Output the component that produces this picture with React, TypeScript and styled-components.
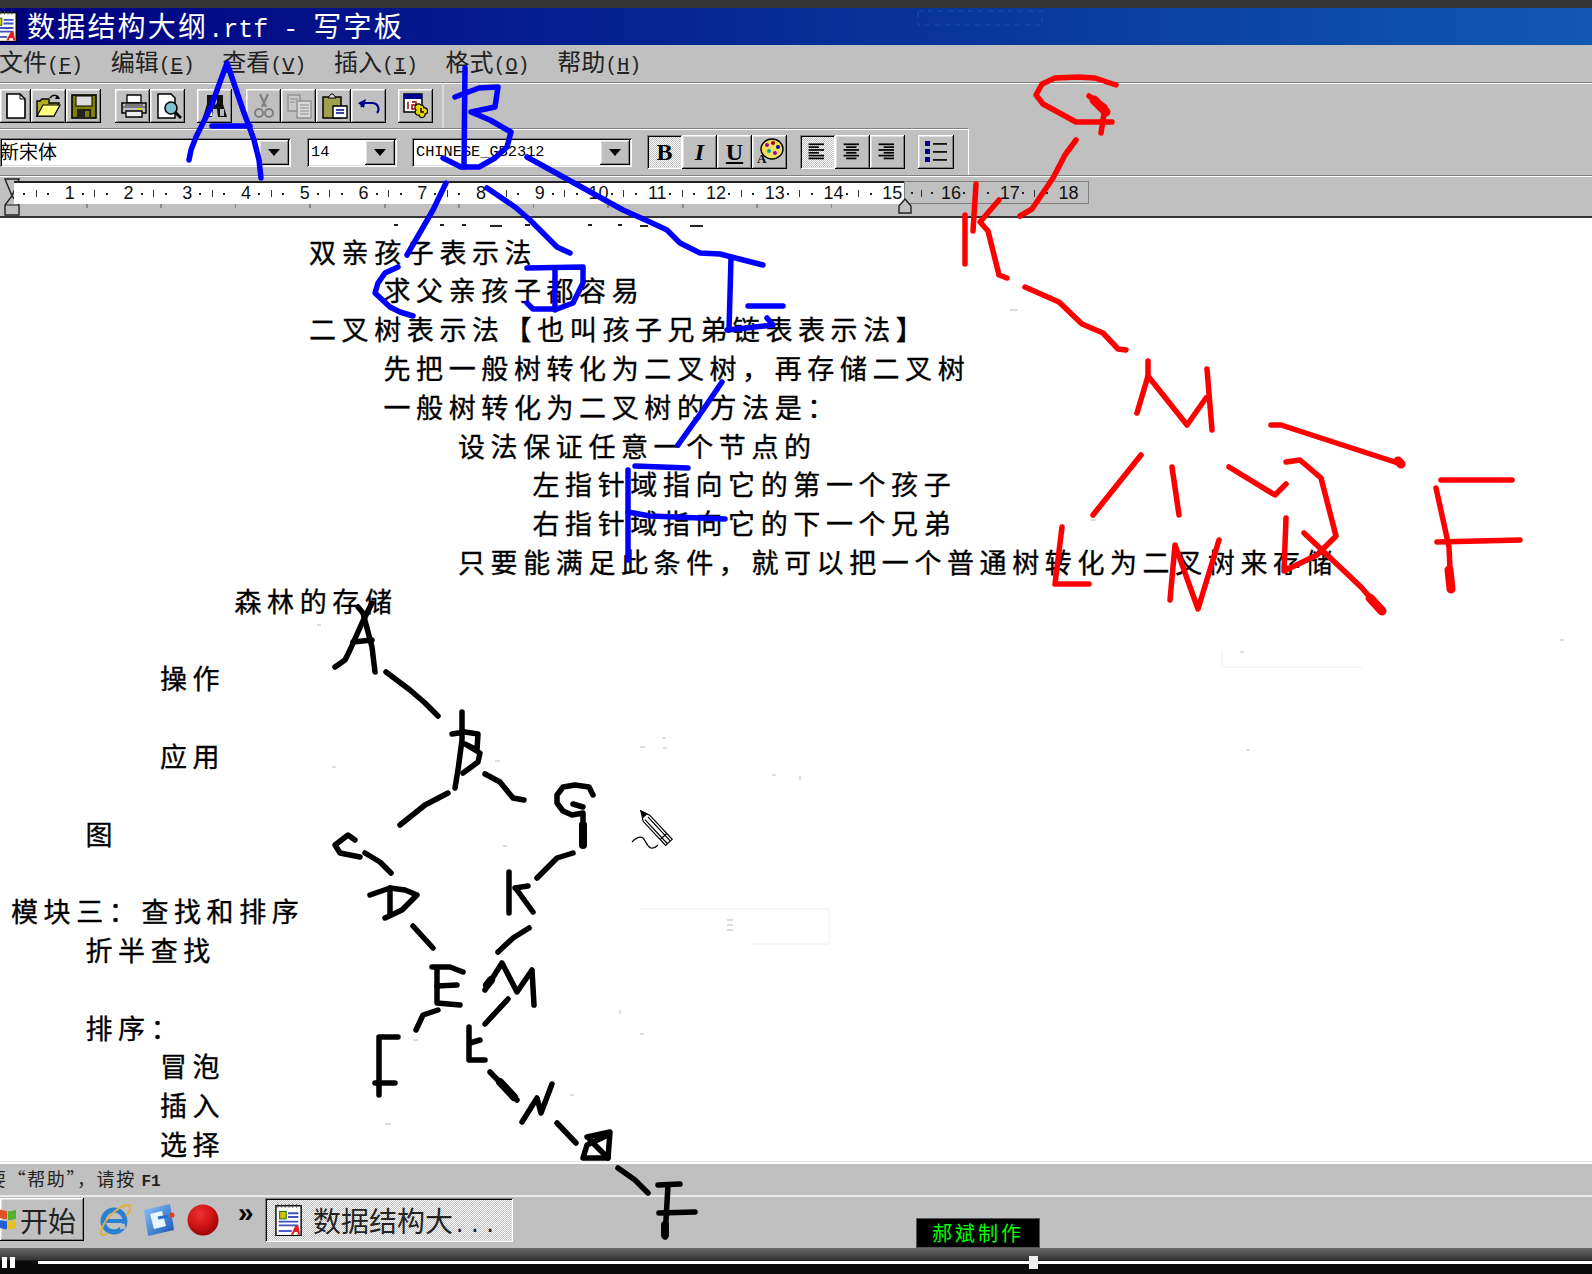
import React from "react";
import styled, { createGlobalStyle, css } from "styled-components";

const Global = createGlobalStyle`
  html, body { margin: 0; padding: 0; background: #c0c0c0; }
  * { box-sizing: border-box; }
`;

const CJK = `"Noto Sans CJK SC", "Liberation Sans", sans-serif`;
const MONO = `"Liberation Mono", "Noto Sans CJK SC", monospace`;

const raised = css`
  background: #c0c0c0;
  box-shadow: inset -1px -1px #000, inset 1px 1px #fff, inset -2px -2px #808080, inset 2px 2px #dfdfdf;
`;
const sunken = css`
  box-shadow: inset 1px 1px #808080, inset -1px -1px #fff, inset 2px 2px #000, inset -2px -2px #dfdfdf;
`;
const dither = css`
  background: repeating-conic-gradient(#fff 0 25%, #c0c0c0 0 50%) 0 0 / 2px 2px;
`;

const Page = styled.div`
  position: relative;
  width: 1592px;
  height: 1274px;
  overflow: hidden;
  display: flex;
  flex-direction: column;
  background: #c0c0c0;
  font-family: ${CJK};
  color: #000;
`;
const TopStrip = styled.div`
  flex: 0 0 8px;
  background: #333;
`;
const TitleBar = styled.div`
  flex: 0 0 37px;
  min-height: 0;
  display: flex;
  align-items: center;
  gap: 9px;
  background: linear-gradient(90deg, #000080 0%, #0a3ea0 70%, #1058b4 100%);
  color: #fff;
  font-size: 28px;
  line-height: 30px;
  white-space: nowrap;
  svg { margin-left: -9px; flex: none; }
`;
const TitleLatin = styled.span`
  font-family: ${MONO};
  font-size: 25px;
  line-height: 1;
  white-space: pre;
`;
const TitleCjk = styled.span`
  letter-spacing: 2.2px;
`;
const MenuBar = styled.div`
  flex: 0 0 37px;
  min-height: 0;
  display: flex;
  gap: 27.6px;
  align-items: center;
  margin-left: -1px;
  padding-bottom: 5px;
  font-size: 24px;
  line-height: 30px;
  color: #222;
`;
const MenuItem = styled.span`
  white-space: nowrap;
`;
const MenuKey = styled.span`
  font-family: ${MONO};
  font-size: 20px;
  line-height: 1;
`;
const MenuLetter = styled.span`
  text-decoration: underline;
`;
const ToolBar = styled.div`
  flex: 0 0 46px;
  min-height: 0;
  display: flex;
  align-items: center;
  border-top: 1px solid #808080;
  box-shadow: inset 0 1px #fff;
`;
const FormatBar = styled.div`
  flex: 0 0 47px;
  min-height: 0;
  display: flex;
  align-items: center;
  width: 969px;
  border-top: 1px solid #808080;
  box-shadow: inset 0 1px #fff;
  border-right: 1px solid #fff;
`;
const Group = styled.div<{ $gap?: number; $ml?: number }>`
  display: flex;
  margin-right: ${(p) => p.$gap ?? 0}px;
  margin-left: ${(p) => p.$ml ?? 0}px;
`;
const ToolBtn = styled.button<{ $on?: boolean; $w?: number }>`
  width: ${(p) => p.$w ?? 35}px;
  height: 34px;
  padding: 0;
  border: 0;
  display: flex;
  align-items: center;
  justify-content: center;
  ${raised}
  ${(p) => p.$on && css`${dither}${sunken}`}
  svg { display: block; }
`;
const Sep = styled.div`
  align-self: stretch;
  width: 2px;
  margin-left: 9px;
  background: #d8d8d8;
`;
const Combo = styled.div<{ $w: number; $ml?: number }>`
  width: ${(p) => p.$w}px;
  margin-left: ${(p) => p.$ml ?? 0}px;
  height: 29px;
  display: flex;
  background: #fff;
  ${sunken}
  padding: 2px;
`;
const ComboText = styled.span<{ $mono?: boolean }>`
  flex: 1;
  min-width: 0;
  white-space: nowrap;
  font-size: ${(p) => (p.$mono ? 15.3 : 19)}px;
  font-family: ${(p) => (p.$mono ? MONO : CJK)};
  line-height: ${(p) => (p.$mono ? 24 : 22)}px;
  padding-left: ${(p) => (p.$mono ? 2 : 0)}px;
  margin-left: ${(p) => (p.$mono ? 0 : -2)}px;
`;
const ComboArrow = styled.div`
  flex: 0 0 30px;
  display: flex;
  align-items: center;
  justify-content: center;
  ${raised}
  &::after {
    content: "";
    border-left: 6px solid transparent;
    border-right: 6px solid transparent;
    border-top: 7px solid #000;
  }
`;
const FmtLetter = styled.span<{ $italic?: boolean; $under?: boolean }>`
  font-family: "Liberation Serif", serif;
  font-weight: 700;
  font-size: 24px;
  line-height: 1;
  font-style: ${(p) => (p.$italic ? "italic" : "normal")};
  text-decoration: ${(p) => (p.$under ? "underline" : "none")};
`;
const RulerBar = styled.div`
  flex: 0 0 43px;
  min-height: 0;
  position: relative;
  display: flex;
  padding: 5px 0 0 14px;
  border-top: 1px solid #808080;
  box-shadow: inset 0 1px #fff;
  border-bottom: 2px solid #333;
`;
const RulerWhite = styled.div`
  width: 890px;
  height: 23px;
  display: flex;
  padding-left: 2px;
  background: #fff;
  border-top: 2px solid #222;
  position: relative;
  &::after {
    content: "";
    position: absolute;
    left: 0;
    right: 0;
    top: 21px;
    height: 4px;
    background: repeating-linear-gradient(90deg, transparent 0 72px, #888 72px 73.5px, transparent 73.5px 74.5px);
  }
`;
const RulerGray = styled.div`
  width: 185px;
  height: 23px;
  display: flex;
  box-shadow: inset 1px 1px #808080, inset -1px -1px #808080;
  padding-top: 1px;
`;
const RulerCell = styled.div<{ $w?: number }>`
  flex: 0 0 ${(p) => p.$w ?? 58.76}px;
  display: flex;
  align-items: center;
  justify-content: space-between;
  padding-left: 7px;
`;
const RulerDot = styled.i`
  width: 2px;
  height: 2px;
  background: #222;
`;
const RulerTick = styled.i`
  width: 1px;
  height: 7px;
  background: #333;
`;
const RulerNum = styled.span`
  font-family: "Liberation Sans", sans-serif;
  font-size: 18px;
  line-height: 21px;
  color: #111;
  width: 20px;
  margin-right: -5px;
  text-align: center;
`;
const IndentMarker = styled.svg`
  position: absolute;
  left: 4px;
  top: 2px;
`;
const RightMarker = styled.svg`
  position: absolute;
  left: 897px;
  top: 22px;
`;
const Doc = styled.div`
  flex: 1;
  min-height: 0;
  background: #fff;
  padding-top: 14.6px;
`;
const DocLine = styled.div<{ $level: number }>`
  height: 38.8px;
  line-height: 38.8px;
  padding-left: ${(p) => 11 + p.$level * 74.5}px;
  font-size: 27px;
  font-weight: 400;
  letter-spacing: 5.6px;
  -webkit-text-stroke: 0.35px #000;
  white-space: nowrap;
  color: #000;
`;
const StatusBar = styled.div`
  flex: 0 0 34px;
  min-height: 0;
  display: flex;
  align-items: center;
  border-top: 1px solid #e4e4e4;
  box-shadow: inset 0 2px #fff;
  padding-bottom: 1px;
  font-size: 18px;
  line-height: 24px;
  letter-spacing: 1.6px;
  color: #222;
  white-space: nowrap;
  overflow: hidden;
`;
const StatusText = styled.span`
  margin-left: -12px;
`;
const StatusKey = styled.span`
  font-family: ${MONO};
  font-weight: 700;
  font-size: 16px;
  line-height: 1;
  letter-spacing: 0;
`;
const TaskBar = styled.div`
  flex: 0 0 53px;
  min-height: 0;
  display: flex;
  align-items: center;
  border-top: 2px solid #e8e8e8;
  padding-bottom: 6px;
  position: relative;
`;
const StartBtn = styled.div`
  width: 84px;
  height: 43px;
  display: flex;
  align-items: center;
  font-size: 28px;
  gap: 3px;
  color: #222;
  ${raised}
  overflow: hidden;
  svg { margin-left: -3px; }
`;
const QuickIcons = styled.div`
  display: flex;
  align-items: center;
  margin-left: 13px;
  gap: 11px;
`;
const Chevron = styled.span`
  font-family: "Liberation Sans", sans-serif;
  font-weight: 700;
  font-size: 28px;
  line-height: 28px;
  margin: -14px 0 0 19px;
  width: 27px;
`;
const TaskBtn = styled.div`
  width: 248px;
  height: 44px;
  display: flex;
  align-items: center;
  gap: 10px;
  padding-left: 10px;
  font-size: 28px;
  line-height: 36px;
  color: #222;
  white-space: nowrap;
  ${dither}
  ${sunken}
`;
const TaskDots = styled.span`
  font-family: ${MONO};
  letter-spacing: 2px;
  font-size: 22px;
  line-height: 1;
`;
const Credit = styled.div`
  position: absolute;
  left: 916px;
  bottom: 0;
  width: 124px;
  height: 30px;
  background: #000;
  border: 1px solid #555;
  color: #0f0;
  font-size: 20px;
  line-height: 28px;
  letter-spacing: 3px;
  text-align: center;
`;
const PlayerBar = styled.div`
  flex: 0 0 26px;
  position: relative;
  background: linear-gradient(180deg, #6a6a6a 0, #333 12px, #0a0a0a 13px);
`;
const PauseBtn = styled.div`
  position: absolute;
  left: 2px;
  top: 9px;
  width: 13px;
  height: 11px;
  border-left: 5px solid #fff;
  border-right: 5px solid #fff;
`;
const Track = styled.div`
  position: absolute;
  left: 38px;
  right: 0;
  top: 13px;
  height: 3px;
  background: #fff;
`;
const Knob = styled.div`
  position: absolute;
  left: 1029px;
  top: 8px;
  width: 9px;
  height: 13px;
  background: #eee;
`;
const Overlay = styled.svg`
  position: absolute;
  left: 0;
  top: 0;
  pointer-events: none;
`;

/* ---------- icons ---------- */
const I = ({ children, s = 28 }: { children: React.ReactNode; s?: number }) => (
  <svg width={s} height={s} viewBox="0 0 28 28">{children}</svg>
);
const NewIcon = () => <I><path d="M5 2h13l5 5v19H5z" fill="#fff" stroke="#000" strokeWidth="1.6" /><path d="M18 2v5h5" fill="none" stroke="#000" /></I>;
const OpenIcon = () => <I><path d="M2 24V9h3l2-2h7v4h10l-5 13z" fill="#b0b020" stroke="#000" strokeWidth="1.4" /><path d="M2 24l6-11h17l-6 11z" fill="#ffff80" stroke="#000" strokeWidth="1.2" /><path d="M15 6c3-4 7-3 9 0" fill="none" stroke="#000" strokeWidth="1.5" /><path d="M22 3l3 4-5 0z" /></I>;
const SaveIcon = () => <I><rect x="2" y="3" width="24" height="23" fill="#808000" stroke="#000" strokeWidth="1.6" /><rect x="6" y="4" width="16" height="10" fill="#ddd" stroke="#000" /><rect x="7" y="17" width="14" height="9" fill="#222" /><rect x="15" y="19" width="4" height="6" fill="#808000" /></I>;
const PrintIcon = () => <I><path d="M8 3h14v8H8z" fill="#fff" stroke="#000" strokeWidth="1.3" /><path d="M3 11h24v10H3z" fill="#c0c0c0" stroke="#000" strokeWidth="1.5" /><path d="M7 19h16v6H7z" fill="#eee" stroke="#000" strokeWidth="1.3" /><path d="M4 15h22M6 13h18" stroke="#333" /><rect x="19" y="16" width="4" height="2" fill="#e0e000" /></I>;
const PreviewIcon = () => <I><path d="M4 2h13l4 4v20H4z" fill="#fff" stroke="#000" strokeWidth="1.5" /><circle cx="17" cy="16" r="6" fill="#80c0d0" stroke="#000" strokeWidth="1.6" /><path d="M21 20l6 6" stroke="#000" strokeWidth="3" /></I>;
const FindIcon = () => <I><path d="M6 3h6v8l2 2 2-2V3h6v9l4 13h-9l-1-8h-4l-1 8H2l4-13z" fill="#111" /><rect x="6" y="17" width="5" height="7" fill="#fff" /><rect x="19" y="17" width="4" height="7" fill="#bbb" /></I>;
const CutIcon = () => <I><path d="M10 2l6 13M18 2l-6 13" stroke="#808080" strokeWidth="2.2" /><circle cx="9" cy="21" r="4" fill="none" stroke="#808080" strokeWidth="2" /><circle cx="19" cy="21" r="4" fill="none" stroke="#808080" strokeWidth="2" /></I>;
const CopyIcon = () => <I><path d="M3 3h12v16H3z" fill="#c8c8c8" stroke="#909090" strokeWidth="1.4" /><path d="M12 9h14v17H12z" fill="#d8d8d8" stroke="#909090" strokeWidth="1.4" /><path d="M5 7h8M5 10h5M15 13h9M15 16h9M15 19h9M15 22h9" stroke="#909090" /></I>;
const PasteIcon = () => <I><rect x="3" y="5" width="18" height="21" fill="#a0a050" stroke="#000" strokeWidth="1.5" /><path d="M8 6l3-4h2l3 4z" fill="#ddd" stroke="#000" /><path d="M13 14h14v12H13z" fill="#fff" stroke="#000" strokeWidth="1.4" /><path d="M16 18h8M16 21h8" stroke="#000090" strokeWidth="1.5" /></I>;
const UndoIcon = () => <I><path d="M6 15l3-4h9a6 6 0 0 1 4 10" fill="none" stroke="#000090" strokeWidth="2" /><path d="M3 11l8-4-2 9z" fill="#000090" /></I>;
const DateIcon = () => <I><rect x="2" y="2" width="18" height="18" fill="#fff" stroke="#000" strokeWidth="1.5" /><rect x="2" y="2" width="18" height="5" fill="#000090" /><path d="M6 10v7M10 10h4v3h-4v4h4" fill="none" stroke="#a00000" strokeWidth="1.5" /><path d="M19 13a3 3 0 0 1 3 3 3 3 0 0 1 1 6 3 3 0 0 1-6 1 3 3 0 0 1-3-5 3 3 0 0 1 5-5z" fill="#e8d800" stroke="#000" strokeWidth="1.2" /><path d="M19 16v4h3" stroke="#000" strokeWidth="1.4" fill="none" /></I>;
const PaletteIcon = () => <I><ellipse cx="16" cy="11" rx="11" ry="10" fill="#f0e060" stroke="#000" strokeWidth="1.4" /><circle cx="11" cy="7" r="2" fill="#a000a0" /><circle cx="17" cy="5" r="2" fill="#a00000" /><circle cx="22" cy="9" r="2" fill="#0000a0" /><circle cx="13" cy="13" r="2" fill="#00a0a0" /><circle cx="19" cy="15" r="2" fill="#a000a0" /><text x="1" y="25" fontSize="13" fontFamily="Liberation Serif" fontWeight="700">A</text></I>;
const Lines = ({ ys }: { ys: [number, number][] }) => (
  <I s={24}>{ys.map(([x, w], i) => <rect key={i} x={x} y={4 + i * 3.3} width={w} height="2" fill="#000" />)}</I>
);
const BulletsIcon = () => <I>{[5, 13, 21].map((y) => <g key={y}><rect x="3" y={y - 2} width="5" height="5" fill="#000090" /><rect x="11" y={y} width="14" height="1.8" fill="#111" /></g>)}</I>;
const DocIcon = ({ s = 30 }: { s?: number }) => (
  <svg width={s} height={s * 1.2} viewBox="0 0 30 36">
    <rect x="1" y="3" width="27" height="32" fill="#fff" stroke="#000" strokeWidth="1.5" />
    <path d="M3 1v4M7 1v4M11 1v4M15 1v4M19 1v4M23 1v4" stroke="#444" />
    <rect x="5" y="9" width="7" height="8" fill="#d8c000" stroke="#060" />
    <path d="M14 11h11M14 15h11M4 20h21M4 24h21" stroke="#4050c0" strokeWidth="2" />
    <path d="M4 30h14" stroke="#4050c0" strokeWidth="2" />
    <path d="M17 34l5-10h3l2 10h-2.500l-.5-3h-3l-1.500 3z" fill="#e02020" />
  </svg>
);
const FlagIcon = () => (
  <svg width="20" height="28" viewBox="0 0 20 28">
    <path d="M1 5c5-3 6 1 9 0v8c-3 1-5-2-9 0z" fill="#e05020" />
    <path d="M11 5c3 1 5-1 8-1v9c-3 0-5 2-8 1z" fill="#50b030" />
    <path d="M1 15c4-2 6 1 9 0v8c-3 1-5-2-9 0z" fill="#2060d0" />
    <path d="M11 15c3 1 5-1 8-1v8c-3 0-5 2-8 1z" fill="#e8c020" />
  </svg>
);
const IEIcon = () => (
  <svg width="34" height="36" viewBox="0 0 34 36">
    <circle cx="17" cy="19" r="11" fill="none" stroke="#2a80d0" strokeWidth="5" />
    <path d="M7 19h20" stroke="#2a80d0" strokeWidth="4" />
    <path d="M28 24l-5 1" stroke="#c0c0c0" strokeWidth="5" />
    <path d="M32 3c-8-1-24 12-28 26-1 5 3 5 7 2" fill="none" stroke="#e0b040" strokeWidth="2" />
    <path d="M24 6c4-3 8-4 9-2 1 3-1 7-4 10" fill="none" stroke="#e0b040" strokeWidth="2" />
  </svg>
);
const QuickIcon = () => (
  <svg width="34" height="36" viewBox="0 0 34 36">
    <defs>
      <linearGradient id="qk" x1="0" y1="0" x2="1" y2="1"><stop offset="0" stopColor="#8cc8ff" /><stop offset="1" stopColor="#1450b0" /></linearGradient>
    </defs>
    <path d="M2 8l26-6 4 26-26 6z" fill="url(#qk)" />
    <path d="M8 12l12-3 4 15-12 3z" fill="#eaf6ff" />
    <path d="M16 16l10-2" stroke="#2a70d0" strokeWidth="3" />
    <circle cx="30" cy="13" r="2.500" fill="#e04020" />
  </svg>
);
const RecordIcon = () => (
  <svg width="32" height="34" viewBox="0 0 32 34">
    <defs>
      <radialGradient id="rec" cx="0.4" cy="0.3" r="0.8"><stop offset="0" stopColor="#f03030" /><stop offset="0.6" stopColor="#c81010" /><stop offset="1" stopColor="#800000" /></radialGradient>
    </defs>
    <circle cx="16" cy="17" r="15.500" fill="url(#rec)" />
  </svg>
);

/* ---------- hand-drawn strokes, full-size coordinates ---------- */
const blue: string[] = [
  "189,160 191,150 196,137 211,107 220,82 227,63 243,110 254,140 259,160 261,178",
  "212,126 250,126",
  "465,68 464,167",
  "455,97 479,88 498,87 495,107 471,112 490,120 511,132 507,147 495,158 479,167 461,167 443,158",
  "446,183 433,210 407,255",
  "487,188 515,207 530,220 545,235 557,247 570,253",
  "527,157 623,210 650,222 667,230 680,243 700,253 720,254 763,265",
  "398,267 385,273 378,283 375,293 390,307 400,312 413,316",
  "527,268 583,267 583,283 573,303 557,309 533,309 527,303",
  "555,268 555,310",
  "731,258 729,330",
  "727,330 773,325 767,318",
  "748,306 783,306",
  "722,382 703,410 678,445",
  "635,466 688,468",
  "628,470 628,560",
  "628,512 650,516 725,519",
];
const red: string[] = [
  "1116,85 1095,78 1078,77 1055,78 1042,84 1036,95 1043,104 1076,122 1112,122",
  "1089,96 1105,107 1101,133",
  "1076,140 1065,155 1053,178 1032,209 1020,216",
  "965,215 965,264",
  "976,184 973,231",
  "999,200 980,222 988,231 999,275 1007,278",
  "1025,287 1059,302 1082,324 1103,333 1118,349 1126,350",
  "1137,413 1148,376 1148,361",
  "1148,376 1187,425 1206,398",
  "1207,369 1212,430",
  "1141,455 1093,515",
  "1172,467 1179,515",
  "1229,467 1275,495 1286,484",
  "1271,425 1281,425 1401,464",
  "1286,462 1300,460 1321,478 1336,536 1317,555 1284,571 1286,518",
  "1304,533 1361,587 1382,611",
  "1441,480 1512,480",
  "1436,488 1449,547 1451,589",
  "1437,542 1520,540",
  "1062,527 1055,584 1089,584",
  "1170,600 1175,545 1198,609 1219,540",
];
const redThick: string[] = ["1094,100 1106,112", "1370,598 1382,611", "1449,570 1451,589", "1398,461 1401,464"];
const black: string[] = [
  "335,667 345,660 350,650 362,623 372,603",
  "358,607 363,613 372,647 375,672",
  "353,642 372,640",
  "386,672 410,690 425,703 438,716",
  "462,712 462,740 458,770 455,788",
  "452,734 465,732 478,734 477,750 465,744 480,753 478,762 463,773",
  "448,793 425,805 400,825",
  "485,774 500,782 513,798 524,800",
  "593,795 589,787 575,785 563,787 557,795 557,803 563,811 572,815 583,813 583,845",
  "573,804 583,807",
  "355,840 348,835 335,845 340,853 360,857",
  "365,853 380,862 391,873",
  "573,853 557,858 537,878",
  "370,895 390,888 405,890 417,895 402,910 385,918",
  "390,888 390,915",
  "413,926 433,948",
  "509,872 509,913",
  "515,888 528,886",
  "517,890 533,912",
  "529,928 513,938 498,952",
  "485,990 490,982 502,963 517,992 532,970 534,1005",
  "432,967 450,967 463,972",
  "437,970 437,1003 460,1005",
  "437,986 457,985",
  "438,1010 423,1015 416,1030",
  "508,999 485,1024",
  "469,1027 469,1060 485,1060",
  "470,1043 480,1040",
  "398,1037 379,1037 379,1095",
  "375,1083 395,1083",
  "490,1072 517,1100",
  "522,1122 537,1098 541,1113 552,1084",
  "557,1123 576,1143",
  "587,1137 610,1132 608,1158 583,1158 587,1145 608,1135",
  "590,1140 608,1158",
  "618,1168 635,1180 648,1193",
  "658,1185 680,1184",
  "668,1185 665,1237",
  "659,1213 695,1212",
];
const blackThick: string[] = ["500,1082 514,1097", "583,825 583,845", "487,985 491,980", "665,1225 665,1235"];
const docTop: string[] = [
  "394,225 398,225", "440,225 444,225", "462,225 466,225", "490,226 502,226", "525,225 530,225",
  "588,225 592,225", "618,225 622,225", "640,226 648,226", "690,226 703,226",
];
const specks: string[] = [
  "317,625 321,625", "332,767 336,767", "495,761 500,761", "640,747 645,747", "663,748 667,748", "662,738 666,738", "772,775 776,775", "800,776 800,780",
  "1246,750 1250,750", "1010,310 1018,310", "1090,520 1096,520", "1560,640 1564,640", "1240,652 1244,652",
  "503,846 507,846", "413,1040 418,1040", "385,1124 391,1124", "570,1095 574,1095", "620,1010 620,1014", "640,1034 644,1034",
  "727,920 733,920", "727,925 733,925", "727,930 733,930",
];

const Strokes = ({ list, color, w }: { list: string[]; color: string; w: number }) => (
  <g fill="none" stroke={color} strokeWidth={w} strokeLinecap="round" strokeLinejoin="round">
    {list.map((p, i) => <polyline key={i} points={p} />)}
  </g>
);

const doc: [number, string][] = [
  [4, "双亲孩子表示法"],
  [5, "求父亲孩子都容易"],
  [4, "二叉树表示法【也叫孩子兄弟链表表示法】"],
  [5, "先把一般树转化为二叉树，再存储二叉树"],
  [5, "一般树转化为二叉树的方法是："],
  [6, "设法保证任意一个节点的"],
  [7, "左指针域指向它的第一个孩子"],
  [7, "右指针域指向它的下一个兄弟"],
  [6, "只要能满足此条件，就可以把一个普通树转化为二叉树来存储"],
  [3, "森林的存储"],
  [0, ""],
  [2, "操作"],
  [0, ""],
  [2, "应用"],
  [0, ""],
  [1, "图"],
  [0, ""],
  [0, "模块三：查找和排序"],
  [1, "折半查找"],
  [0, ""],
  [1, "排序："],
  [2, "冒泡"],
  [2, "插入"],
  [2, "选择"],
];
const menus: [string, string][] = [["文件", "F"], ["编辑", "E"], ["查看", "V"], ["插入", "I"], ["格式", "O"], ["帮助", "H"]];
const ruler = Array.from({ length: 18 }, (_, i) => i + 1);

const Cell = ({ n, w }: { n: number; w?: number }) => (
  <RulerCell $w={w}>
    <RulerDot /><RulerTick /><RulerDot /><RulerNum>{n}</RulerNum>
  </RulerCell>
);

export default function App() {
  return (
    <Page>
      <Global />
      <TopStrip />
      <TitleBar>
        <DocIcon s={27} />
        <span>
          <TitleCjk>数据结构大纲</TitleCjk>
          <TitleLatin>.rtf - </TitleLatin>
          <TitleCjk>写字板</TitleCjk>
        </span>
      </TitleBar>
      <MenuBar>
        {menus.map(([t, k]) => (
          <MenuItem key={k}>{t}<MenuKey>(<MenuLetter>{k}</MenuLetter>)</MenuKey></MenuItem>
        ))}
      </MenuBar>
      <ToolBar>
        <Group $gap={14}>
          <ToolBtn $w={31}><NewIcon /></ToolBtn>
          <ToolBtn><OpenIcon /></ToolBtn>
          <ToolBtn><SaveIcon /></ToolBtn>
        </Group>
        <Group $gap={12}>
          <ToolBtn><PrintIcon /></ToolBtn>
          <ToolBtn><PreviewIcon /></ToolBtn>
        </Group>
        <Group $gap={14}>
          <ToolBtn><FindIcon /></ToolBtn>
        </Group>
        <Group $gap={12}>
          <ToolBtn><CutIcon /></ToolBtn>
          <ToolBtn><CopyIcon /></ToolBtn>
          <ToolBtn><PasteIcon /></ToolBtn>
          <ToolBtn><UndoIcon /></ToolBtn>
        </Group>
        <Group>
          <ToolBtn><DateIcon /></ToolBtn>
        </Group>
        <Sep />
      </ToolBar>
      <FormatBar>
        <Combo $w={291}><ComboText>新宋体</ComboText><ComboArrow /></Combo>
        <Combo $w={90} $ml={16}><ComboText $mono>14</ComboText><ComboArrow /></Combo>
        <Combo $w={220} $ml={15}><ComboText $mono>CHINESE_GB2312</ComboText><ComboArrow /></Combo>
        <Group $gap={13} $ml={15}>
          <ToolBtn $on><FmtLetter>B</FmtLetter></ToolBtn>
          <ToolBtn><FmtLetter $italic>I</FmtLetter></ToolBtn>
          <ToolBtn><FmtLetter $under>U</FmtLetter></ToolBtn>
          <ToolBtn><PaletteIcon /></ToolBtn>
        </Group>
        <Group $gap={13}>
          <ToolBtn $on><Lines ys={[[3, 18], [3, 12], [3, 18], [3, 12], [3, 18], [3, 18]]} /></ToolBtn>
          <ToolBtn><Lines ys={[[3, 18], [6, 12], [3, 18], [6, 12], [3, 18], [6, 12]]} /></ToolBtn>
          <ToolBtn><Lines ys={[[3, 18], [9, 12], [3, 18], [9, 12], [3, 18], [9, 12]]} /></ToolBtn>
        </Group>
        <ToolBtn $w={36}><BulletsIcon /></ToolBtn>
      </FormatBar>
      <RulerBar>
        <IndentMarker width="16" height="38" viewBox="0 0 16 38">
          <path d="M1 1h14L8 18l7 9v10H1V27l7-9z" fill="#c0c0c0" stroke="#222" strokeWidth="1.4" />
          <path d="M1 27h14" stroke="#222" />
        </IndentMarker>
        <RulerWhite>
          {ruler.slice(0, 15).map((n) => <Cell key={n} n={n} />)}
        </RulerWhite>
        <RulerGray>
          {ruler.slice(15).map((n, i) => <Cell key={n} n={n} w={i === 0 ? 52 : undefined} />)}
        </RulerGray>
        <RightMarker width="16" height="16" viewBox="0 0 16 16">
          <path d="M8 1l6 7v7H2V8z" fill="#c0c0c0" stroke="#222" strokeWidth="1.4" />
        </RightMarker>
      </RulerBar>
      <Doc>
        {doc.map(([lv, t], i) => <DocLine key={i} $level={lv}>{t}</DocLine>)}
      </Doc>
      <StatusBar>
        <StatusText>要“帮助”，请按 <StatusKey>F1</StatusKey></StatusText>
      </StatusBar>
      <TaskBar>
        <StartBtn><FlagIcon />开始</StartBtn>
        <QuickIcons><IEIcon /><QuickIcon /><RecordIcon /></QuickIcons>
        <Chevron>»</Chevron>
        <TaskBtn><DocIcon s={28} /><span>数据结构大<TaskDots>...</TaskDots></span></TaskBtn>
        <Credit>郝斌制作</Credit>
      </TaskBar>
      <PlayerBar>
        <PauseBtn />
        <Track />
        <Knob />
      </PlayerBar>
      <Overlay width="1592" height="1274" viewBox="0 0 1592 1274">
        <rect x="918" y="11" width="124" height="14" fill="none" stroke="#1a4fb0" strokeDasharray="5 5" />
        <path d="M640 909H829V944H752M1222 650v17h140" fill="none" stroke="#eeeeee" />
        <g fill="none" stroke="#222" strokeWidth="2">{docTop.map((p, i) => <polyline key={i} points={p} />)}</g>
        <g fill="none" stroke="#bbb" strokeWidth="1">{specks.map((p, i) => <polyline key={i} points={p} />)}</g>
        <Strokes list={blue} color="#0000ff" w={5.5} />
        <Strokes list={red} color="#ff0000" w={5.5} />
        <Strokes list={redThick} color="#ff0000" w={9} />
        <Strokes list={black} color="#000" w={5.5} />
        <Strokes list={blackThick} color="#000" w={8} />
        <g transform="translate(641 811) rotate(47)" fill="#fff" stroke="#000" strokeWidth="1.2">
          <path d="M0 0l9-3.5h33v9H9z" />
          <path d="M0 0l6-2.2v4.5z" fill="#000" />
          <path d="M9-1h33M9 3h33M34-3.5v9" fill="none" />
        </g>
        <path d="M632 842c4-4 8-6 11-4 3 3 4 9 8 10 3 1 5-1 7-3" fill="none" stroke="#000" strokeWidth="1.2" />
      </Overlay>
    </Page>
  );
}
